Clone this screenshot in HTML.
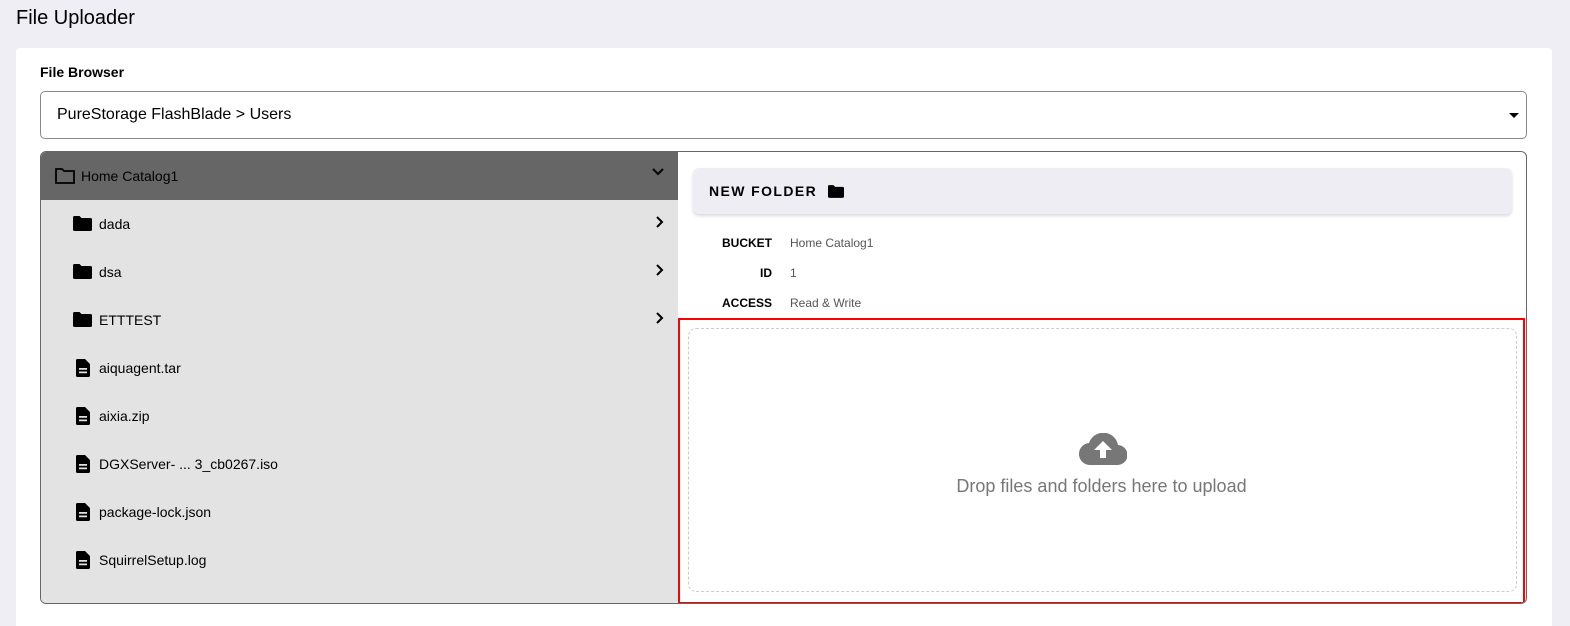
<!DOCTYPE html>
<html><head><meta charset="utf-8"><style>
*{box-sizing:border-box;margin:0;padding:0}
html,body{width:1570px;height:626px;overflow:hidden}
body{background:#efeef4;font-family:"Liberation Sans",sans-serif;position:relative;color:#000}
.title{position:absolute;left:16px;top:7px;font-size:20px}
.card{position:absolute;left:16px;top:48px;width:1536px;height:578px;background:#fff;border-radius:4px 4px 0 0}
.lbl{position:absolute;left:40px;top:64px;font-size:14px;font-weight:bold}
.sel{position:absolute;left:40px;top:91px;width:1487px;height:48px;border:1px solid #8a8a8a;border-radius:5px;font-size:16px;padding:14px 16px}
.sel:after{content:"";position:absolute;right:7px;top:21px;border:5px solid transparent;border-top:5px solid #000}
.box{position:absolute;left:40px;top:151px;width:1487px;height:453px;border:1px solid #666;border-radius:6px;overflow:hidden}
.left{position:absolute;left:0;top:0;width:637px;height:100%;background:#e3e3e3}
.head{height:48px;background:#666;font-size:14px;padding:16px 0 0 40px;position:relative}
.row{height:48px;position:relative;font-size:14px;padding:16px 0 0 58px}
.ic{position:absolute;left:32px;top:16px}
.head .ic{left:14px}
.chev{position:absolute;right:14px;top:16px}
.panel{position:absolute;left:652px;top:16px;width:819px;height:46px;background:#efedf4;border-radius:6px;box-shadow:0 2px 3px rgba(0,0,0,.15);font-size:14px;font-weight:bold;letter-spacing:1.4px;padding:15px 16px}
.k{position:absolute;font-size:12px;font-weight:bold;text-align:right;width:100px;left:631px}
.v{position:absolute;font-size:12px;color:#555;left:749px}
.drop{position:absolute;left:637px;top:166px;width:847px;height:286px;border:2px solid #f00}
.dash{position:absolute;left:8px;top:8px;right:6px;bottom:10px;border:1px dashed #ccc;border-radius:8px}
.dt{position:absolute;left:0;right:0;top:156px;text-align:center;font-size:18px;color:#777}
</style></head><body>
<div class="title">File Uploader</div>
<div class="card"></div>
<div class="lbl">File Browser</div>
<div class="sel">PureStorage FlashBlade &gt; Users</div>
<div class="box">
 <div class="left">
  <div class="head"><svg class="ic" width="20" height="16" viewBox="0 0 20 16"><path d="M1 1h6l2 2h10v12H1z" fill="none" stroke="#000" stroke-width="1.8"/></svg>Home Catalog1<svg class="chev" width="12" height="8" viewBox="0 0 12 8"><path d="M1 1l5 5 5-5" fill="none" stroke="#000" stroke-width="2"/></svg></div>
  <div class="row"><svg class="ic" width="19" height="15" viewBox="0 0 19 15"><path d="M0 1.5Q0 0 1.5 0h5l2 2h9Q19 2 19 3.5V13.5Q19 15 17.5 15h-16Q0 15 0 13.5z"/></svg>dada<svg class="chev" width="8" height="12" viewBox="0 0 8 12"><path d="M1 1l5 5-5 5" fill="none" stroke="#000" stroke-width="2"/></svg></div>
  <div class="row"><svg class="ic" width="19" height="15" viewBox="0 0 19 15"><path d="M0 1.5Q0 0 1.5 0h5l2 2h9Q19 2 19 3.5V13.5Q19 15 17.5 15h-16Q0 15 0 13.5z"/></svg>dsa<svg class="chev" width="8" height="12" viewBox="0 0 8 12"><path d="M1 1l5 5-5 5" fill="none" stroke="#000" stroke-width="2"/></svg></div>
  <div class="row"><svg class="ic" width="19" height="15" viewBox="0 0 19 15"><path d="M0 1.5Q0 0 1.5 0h5l2 2h9Q19 2 19 3.5V13.5Q19 15 17.5 15h-16Q0 15 0 13.5z"/></svg>ETTTEST<svg class="chev" width="8" height="12" viewBox="0 0 8 12"><path d="M1 1l5 5-5 5" fill="none" stroke="#000" stroke-width="2"/></svg></div>
  <div class="row"><svg class="ic" style="left:35px;top:15px" width="14" height="18" viewBox="0 0 14 18"><path d="M1.5 0H9l5 5v11.5Q14 18 12.5 18h-11Q0 18 0 16.5V1.5Q0 0 1.5 0zM3 9h8v1.8H3zM3 12.5h8v1.8H3z" fill-rule="evenodd"/></svg>aiquagent.tar</div>
  <div class="row"><svg class="ic" style="left:35px;top:15px" width="14" height="18" viewBox="0 0 14 18"><path d="M1.5 0H9l5 5v11.5Q14 18 12.5 18h-11Q0 18 0 16.5V1.5Q0 0 1.5 0zM3 9h8v1.8H3zM3 12.5h8v1.8H3z" fill-rule="evenodd"/></svg>aixia.zip</div>
  <div class="row"><svg class="ic" style="left:35px;top:15px" width="14" height="18" viewBox="0 0 14 18"><path d="M1.5 0H9l5 5v11.5Q14 18 12.5 18h-11Q0 18 0 16.5V1.5Q0 0 1.5 0zM3 9h8v1.8H3zM3 12.5h8v1.8H3z" fill-rule="evenodd"/></svg>DGXServer- ... 3_cb0267.iso</div>
  <div class="row"><svg class="ic" style="left:35px;top:15px" width="14" height="18" viewBox="0 0 14 18"><path d="M1.5 0H9l5 5v11.5Q14 18 12.5 18h-11Q0 18 0 16.5V1.5Q0 0 1.5 0zM3 9h8v1.8H3zM3 12.5h8v1.8H3z" fill-rule="evenodd"/></svg>package-lock.json</div>
  <div class="row"><svg class="ic" style="left:35px;top:15px" width="14" height="18" viewBox="0 0 14 18"><path d="M1.5 0H9l5 5v11.5Q14 18 12.5 18h-11Q0 18 0 16.5V1.5Q0 0 1.5 0zM3 9h8v1.8H3zM3 12.5h8v1.8H3z" fill-rule="evenodd"/></svg>SquirrelSetup.log</div>
 </div>
 <div class="panel">NEW FOLDER <svg style="vertical-align:-2px;margin-left:6px" width="16" height="13" viewBox="0 0 19 15"><path d="M0 1.5Q0 0 1.5 0h5l2 2h9Q19 2 19 3.5V13.5Q19 15 17.5 15h-16Q0 15 0 13.5z"/></svg></div>
 <div class="k" style="top:84px">BUCKET</div><div class="v" style="top:84px">Home Catalog1</div>
 <div class="k" style="top:114px">ID</div><div class="v" style="top:114px">1</div>
 <div class="k" style="top:144px">ACCESS</div><div class="v" style="top:144px">Read &amp; Write</div>
 <div class="drop"><div class="dash"></div>
  <svg style="position:absolute;left:399px;top:113px" width="48" height="32" viewBox="0 0 48 32"><path d="M12 32H38a10 10 0 0 0 1-20A15 15 0 0 0 10 10 11 11 0 0 0 12 32z" fill="#777"/><path d="M24 8l9 9h-6v8h-6v-8h-6z" fill="#fff"/></svg>
  <div class="dt">Drop files and folders here to upload</div>
 </div>
</div>
</body></html>
